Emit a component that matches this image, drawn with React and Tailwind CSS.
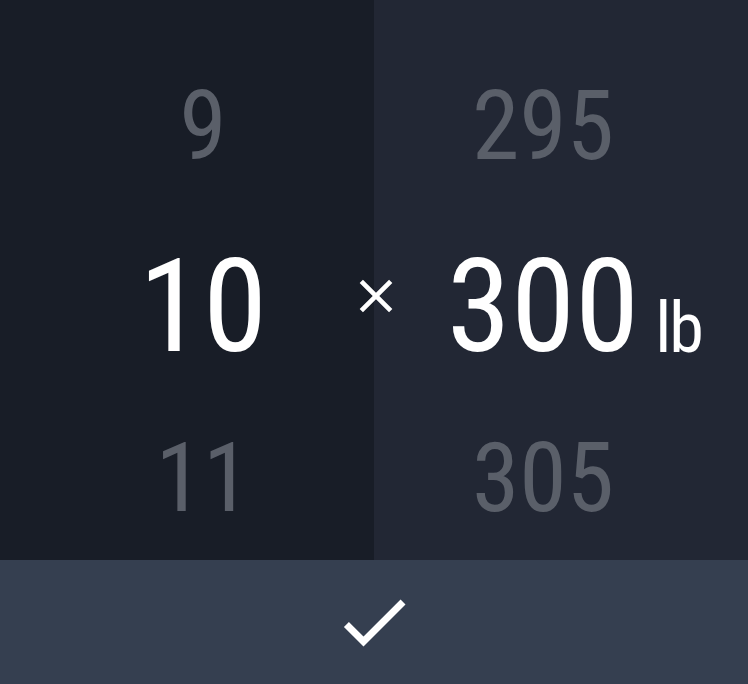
export default function App() {
  const font = { fontFamily: '"Roboto Condensed", Roboto, sans-serif' };
  return (
    <div className="w-[748px] h-[684px] flex flex-col bg-[#181d27]" style={font}>
      <div className="relative flex h-[560px]">
        <div className="w-[374px] bg-[#181d27] flex flex-col items-center pl-8">
          <div className="mt-[78px] text-[96px] leading-none text-[#5a5f69]">9</div>
          <div className="mt-[68px] text-[130px] leading-none text-white">10</div>
          <div className="mt-[58px] text-[96px] leading-none text-[#5a5f69]">11</div>
        </div>
        <div className="w-[374px] bg-[#222734] flex flex-col items-center pr-[36px]">
          <div className="mt-[78px] text-[96px] leading-none text-[#5a5f69]">295</div>
          <div className="mt-[68px] text-[130px] leading-none text-white">
            <span className="relative">
              300
              <span className="absolute left-full bottom-[20px] ml-[16px] text-[70px] leading-none tracking-[-2px]">lb</span>
            </span>
          </div>
          <div className="mt-[58px] text-[96px] leading-none text-[#5a5f69]">305</div>
        </div>
        <svg className="absolute left-[348px] top-[268px]" width="56" height="56" viewBox="0 0 24 24" fill="#fff">
          <path d="M19 6.41L17.59 5 12 10.59 6.41 5 5 6.41 10.59 12 5 17.59 6.41 19 12 13.41 17.59 19 19 17.59 13.41 12z" />
        </svg>
      </div>
      <div className="h-[124px] bg-[#353f50] flex items-center justify-center">
        <svg width="84" height="84" viewBox="0 0 24 24" fill="#fff">
          <path d="M9 16.17L4.83 12l-1.42 1.41L9 19 21 7l-1.41-1.41z" />
        </svg>
      </div>
    </div>
  );
}
